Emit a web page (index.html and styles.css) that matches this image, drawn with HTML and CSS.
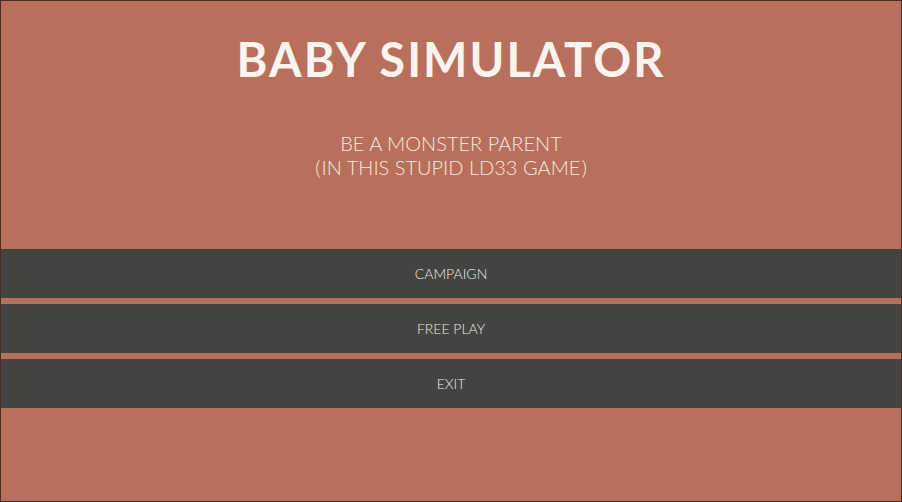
FILE: index.html
```html
<!DOCTYPE html>
<html lang="en">
  <head>
    <meta charset="UTF-8" />
    <meta name="viewport" content="width=device-width, initial-scale=1.0" />
    <title>Baby Simulator</title>
    <link rel="stylesheet" href="styles.css">
  </head>

  <body>
    <main class="screen">
      <h1 class="title">BABY SIMULATOR</h1>
      <p class="tagline">BE A MONSTER PARENT<br>(&#8202;IN THIS STUPID LD33 GAME&#8202;)</p>
      <nav class="menu">
        <button class="menu-item">CAMPAIGN</button>
        <button class="menu-item">FREE PLAY</button>
        <button class="menu-item">EXIT</button>
      </nav>
    </main>
  </body>
</html>
```

FILE: styles.css
```css
html,
body {
  margin: 0;
  height: 100%;
}
body {
  background-color: #b8705c;
  font-family: "Lato", "Open Sans", sans-serif;
}
.screen {
  box-sizing: border-box;
  height: 100%;
  border: 1px solid #4a2c24;
  display: flex;
  flex-direction: column;
  align-items: stretch;
}
.title {
  margin: 32px 0 0;
  text-align: center;
  color: #fbf4ee;
  font-family: "Lato", sans-serif;
  font-weight: 700;
  font-size: 47px;
  letter-spacing: 2px;
  line-height: 52px;
}
.tagline {
  margin: 46px 0 0;
  text-align: center;
  color: #f6e8de;
  font-weight: 300;
  font-size: 20px;
  line-height: 24px;
}
.menu {
  margin-top: 70px;
  display: flex;
  flex-direction: column;
  gap: 6px;
}
.menu-item {
  height: 49px;
  border: none;
  background-color: #434440;
  color: #eeeae4;
  font-family: "Lato", sans-serif;
  font-weight: 300;
  font-size: 14px;
  cursor: pointer;
}
```
